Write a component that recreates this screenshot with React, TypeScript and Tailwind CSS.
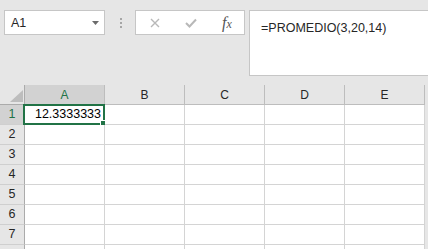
import React from 'react';

const COLS = ['A', 'B', 'C', 'D', 'E'];
const ROWS = [1, 2, 3, 4, 5, 6, 7, 8];

const font = { fontFamily: '"Liberation Sans", Arial, sans-serif' };

const App: React.FC = () => {
  return (
    <div className="w-[428px] h-[249px] overflow-hidden bg-[#e6e6e6] text-[#262626]" style={font}>
      {/* formula bar */}
      <div className="h-[85px] flex items-start pt-[10px] pl-[4px]">
        <div className="w-[101px] h-[25px] shrink-0 bg-white border border-[#c6c6c6] flex items-center justify-between pl-[6px] pr-[5px] pt-[1px]">
          <span className="text-[12.5px] leading-none">A1</span>
          <svg width="7" height="4" viewBox="0 0 7 4">
            <polygon points="0,0 7,0 3.5,4" fill="#6b6b6b" />
          </svg>
        </div>
        <div className="ml-[15px] h-[25px] flex flex-col justify-center gap-[2px] pt-[1px]">
          <div className="w-[2px] h-[2px] bg-[#a6a6a6]" />
          <div className="w-[2px] h-[2px] bg-[#a6a6a6]" />
          <div className="w-[2px] h-[2px] bg-[#a6a6a6]" />
        </div>
        <div className="ml-[13px] w-[110px] h-[25px] shrink-0 bg-white border border-[#c6c6c6] flex items-center">
          <svg className="ml-[14px]" width="10" height="10" viewBox="0 0 10 10">
            <path d="M1 1 L9 9 M9 1 L1 9" stroke="#b8b8b8" strokeWidth="1.4" fill="none" />
          </svg>
          <svg className="ml-[25px]" width="12" height="10" viewBox="0 0 12 10">
            <path d="M1 5 L4.5 8.5 L11 1.5" stroke="#b8b8b8" strokeWidth="2" fill="none" />
          </svg>
          <span
            className="ml-[25px] text-[16px] italic text-[#555] leading-none"
            style={{ fontFamily: '"Liberation Serif", "Times New Roman", serif' }}
          >
            f<span className="text-[12px]">x</span>
          </span>
        </div>
        <div className="ml-[4px] w-[200px] h-[66px] shrink-0 bg-white border border-[#c6c6c6] pl-[11px] pt-[4px]">
          <span className="text-[12.5px] leading-[18px]">=PROMEDIO(3,20,14)</span>
        </div>
      </div>

      {/* grid */}
      <div className="flex flex-col">
        <div className="flex h-[20px]">
          <div className="w-[25px] h-[20px] shrink-0 border-r border-b border-[#ababab] flex items-end justify-end pr-[1px] pb-[2px]">
            <svg width="13" height="12" viewBox="0 0 13 12">
              <polygon points="13,0 13,12 0,12" fill="#bdbdbd" />
            </svg>
          </div>
          {COLS.map((c) => (
            <div
              key={c}
              className={`w-[80px] h-[20px] shrink-0 border-r border-b border-[#bdbdbd] flex items-center justify-center text-[12px] ${
                c === 'A' ? 'bg-[#d2d2d2] text-[#217346]' : 'text-[#262626]'
              }`}
            >
              {c}
            </div>
          ))}
        </div>
        {ROWS.map((r) => (
          <div key={r} className="flex h-[20px]">
            <div
              className={`w-[25px] h-[20px] shrink-0 border-r border-b border-r-[#ababab] border-b-[#cfcfcf] flex items-center justify-center text-[12.5px] ${
                r === 1 ? 'bg-[#d2d2d2] text-[#217346]' : 'text-[#262626]'
              }`}
            >
              {r < 8 ? r : null}
            </div>
            {COLS.map((c) => (
              <div
                key={c}
                className="relative w-[80px] h-[20px] shrink-0 bg-white border-r border-b border-[#d4d4d4] flex items-center justify-end pr-[3px] text-[12.5px] text-black"
              >
                {r === 1 && c === 'A' && (
                  <>
                    12.3333333
                    <div className="absolute left-[-2px] top-[-1px] right-[-1px] bottom-[-1px] border-2 border-[#217346]">
                      <div className="absolute right-[-4px] bottom-[-4px] w-[7px] h-[7px] bg-[#217346] border border-white" />
                    </div>
                  </>
                )}
              </div>
            ))}
          </div>
        ))}
      </div>
    </div>
  );
};

export default App;
